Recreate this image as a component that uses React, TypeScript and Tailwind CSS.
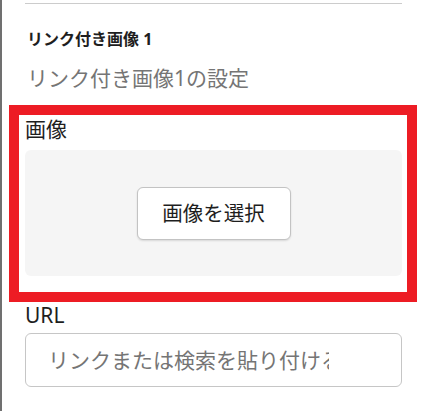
export default function App() {
  const font = { fontFamily: '"Noto Sans", "Noto Sans CJK JP", sans-serif' };
  return (
    <div
      className="w-[421px] h-[411px] overflow-hidden bg-white border-l-2 border-[#707070]"
      style={font}
    >
      <div className="ml-[23px] w-[377px] flex flex-col">
        <div className="mt-[3px] h-px bg-[#cccccc]" />
        <div className="mt-[23px] pl-[2px] text-[16px] leading-[24px] font-bold text-[#1e1e1e]">
          リンク付き画像 1
        </div>
        <div className="mt-[13px] pl-[2px] text-[21px] leading-[28px] text-[#757575]">
          リンク付き画像1の設定
        </div>
        <div className="mt-[13px] -ml-[16px] w-[408px] border-[10px] border-[#ed1c24] pl-[6px] pr-[5px] pb-[16px] flex flex-col">
          <div className="text-[21px] leading-[28px] text-[#1e1e1e]">画像</div>
          <div className="mt-[7px] h-[126px] rounded-[6px] bg-[#f5f5f5] flex items-center justify-center">
            <button className="w-[154px] h-[53px] rounded-[6px] border border-[#c3c3c3] bg-white text-[20.5px] leading-[28px] text-[#1e1e1e] shadow-[0_1px_2px_rgba(0,0,0,0.12)]">
              画像を選択
            </button>
          </div>
        </div>
        <div className="mt-[1px] text-[21px] leading-[24px] text-[#1e1e1e]">URL</div>
        <div className="mt-[6px] h-[54px] rounded-[6px] border border-[#c6c6c6] pl-[22px] pr-[72px] flex items-center">
          <div className="overflow-hidden whitespace-nowrap text-[21px] leading-[28px] text-[#757575]">
            リンクまたは検索を貼り付けるか入力
          </div>
        </div>
      </div>
    </div>
  );
}
